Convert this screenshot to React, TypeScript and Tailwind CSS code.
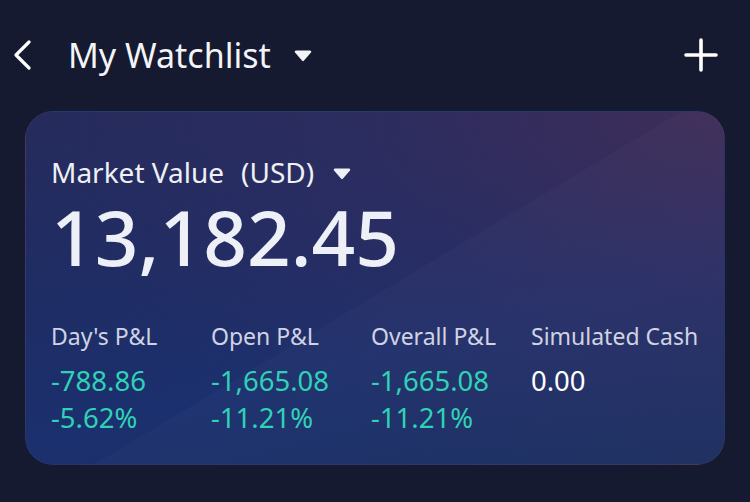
const stats = [
  { label: "Day's P&L", value: '-788.86', pct: '-5.62%' },
  { label: 'Open P&L', value: '-1,665.08', pct: '-11.21%' },
  { label: 'Overall P&L', value: '-1,665.08', pct: '-11.21%' },
  { label: 'Simulated Cash', value: '0.00', pct: '' },
];

const Caret = ({ className }: { className: string }) => (
  <svg className={className} viewBox="0 0 18 13" fill="currentColor">
    <path d="M2 1.5h14a1.3 1.3 0 0 1 1 2.1l-7 8a1.3 1.3 0 0 1-2 0l-7-8A1.3 1.3 0 0 1 2 1.5z" />
  </svg>
);

const App = () => {
  return (
    <div className="w-[750px] h-[502px] overflow-hidden bg-[#151a30] text-white font-['Noto_Sans',sans-serif]">
      <div className="h-[111px] flex items-center justify-between pl-[13px] pr-[32px] pb-[2px]">
        <div className="flex items-center">
          <svg className="w-[18px] h-[30px] text-white" viewBox="0 0 18 30" fill="none" stroke="currentColor" strokeWidth="3.2" strokeLinecap="round" strokeLinejoin="round">
            <path d="M16 2 3 15l13 13" />
          </svg>
          <div className="ml-[37px] text-[34px] leading-[40px] text-[#f3f4f8]">My Watchlist</div>
          <Caret className="ml-[23px] w-[18px] h-[13px] mt-[2px] text-[#f3f4f8]" />
        </div>
        <svg className="w-[34px] h-[34px] text-white" viewBox="0 0 34 34" fill="none" stroke="currentColor" strokeWidth="3.6" strokeLinecap="round">
          <path d="M17 2v30M2 17h30" />
        </svg>
      </div>

      <div className="mx-[25px] h-[354px] rounded-[28px] px-[25px] pt-[41px] border border-white/[0.04] bg-[linear-gradient(149deg,transparent_51%,rgba(255,255,255,0.02)_51%),radial-gradient(ellipse_at_100%_0%,rgba(68,45,86,0.85)_0%,rgba(56,45,94,0.45)_38%,transparent_75%),linear-gradient(165deg,#242b5b_0%,#1e2d66_40%,#1b306e_62%,#1a2d5e_100%)]">
        <div className="flex items-center text-[28px] leading-[38px] text-[#eef0f6]">
          <span>Market Value</span>
          <span className="ml-[17px]">(USD)</span>
          <Caret className="ml-[19px] w-[18px] h-[13px] mt-[2px]" />
        </div>
        <div className="mt-[5px] text-[76.5px] leading-[80px] font-medium text-[#eef0f8]">13,182.45</div>

        <div className="mt-[45px] grid grid-cols-[160px_160px_160px_1fr]">
          {stats.map((s) => (
            <div key={s.label} className="flex flex-col">
              <div className="text-[23px] leading-[30px] text-[#cfd3e4] whitespace-nowrap">{s.label}</div>
              <div className={`mt-[11px] text-[27.5px] leading-[37px] ${s.pct ? 'text-[#2fd2b4]' : 'text-white'}`}>{s.value}</div>
              {s.pct && <div className="text-[27.5px] leading-[37px] text-[#2fd2b4]">{s.pct}</div>}
            </div>
          ))}
        </div>
      </div>
    </div>
  );
};

export default App;
